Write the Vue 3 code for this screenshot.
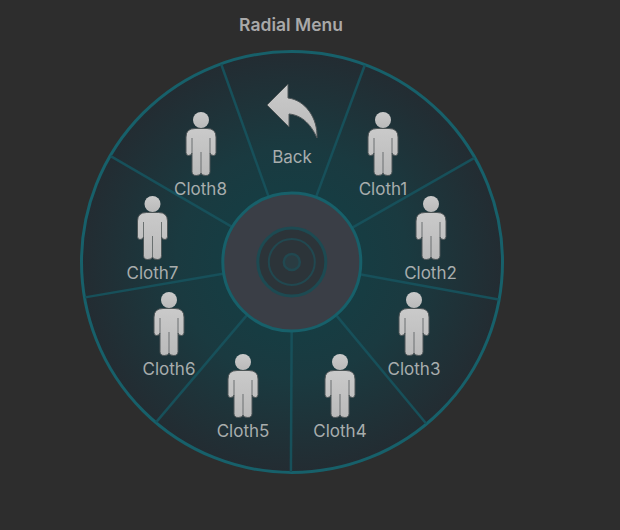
<script setup>
const cx = 292
const cy = 262
const spokeAngles = [20, 60, 100, 140, 180, 220, 260, 300, 340]
const spokes = spokeAngles.map((deg) => {
  const a = ((deg + 0.3) * Math.PI) / 180
  return {
    x1: cx + Math.sin(a) * 70,
    y1: cy - Math.cos(a) * 70,
    x2: cx + Math.sin(a) * 210,
    y2: cy - Math.cos(a) * 210
  }
})
const items = [
  { label: 'Cloth1', x: 383, y: 112, lx: 383, ly: 195 },
  { label: 'Cloth2', x: 431, y: 196, lx: 430.5, ly: 279 },
  { label: 'Cloth3', x: 414, y: 292, lx: 414, ly: 375 },
  { label: 'Cloth4', x: 340, y: 354, lx: 340, ly: 437 },
  { label: 'Cloth5', x: 243, y: 354, lx: 243, ly: 437 },
  { label: 'Cloth6', x: 169, y: 292, lx: 169, ly: 375 },
  { label: 'Cloth7', x: 152.5, y: 196, lx: 152.5, ly: 279 },
  { label: 'Cloth8', x: 201, y: 112, lx: 200.5, ly: 195 }
]
</script>

<template>
  <main class="page">
    <h1 class="title">Radial Menu</h1>
    <div class="canvas">
      <svg class="wheel" width="620" height="530" viewBox="0 0 620 530">
        <defs>
          <radialGradient id="wheelFill" cx="292" cy="262" r="210" gradientUnits="userSpaceOnUse">
            <stop offset="0" stop-color="#114046" />
            <stop offset="0.55" stop-color="#1a3a40" />
            <stop offset="1" stop-color="#232c32" />
          </radialGradient>
          <linearGradient id="iconFill" x1="0" y1="0" x2="0" y2="1">
            <stop offset="0" stop-color="#cacaca" />
            <stop offset="1" stop-color="#bababa" />
          </linearGradient>
          <filter id="soft" x="-10%" y="-10%" width="120%" height="120%">
            <feGaussianBlur stdDeviation="0.35" />
          </filter>
        </defs>
        <circle :cx="cx" :cy="cy" r="210.500" fill="url(#wheelFill)" stroke="#17606a" stroke-width="3" />
        <line
          v-for="(s, i) in spokes"
          :key="i"
          :x1="s.x1"
          :y1="s.y1"
          :x2="s.x2"
          :y2="s.y2"
          stroke="#17505a"
          stroke-width="2.500"
        />
        <circle cx="291.800" :cy="cy" r="69" fill="#3a3e46" stroke="#17606a" stroke-width="3" />
        <circle cx="291.800" :cy="cy" r="34" fill="#2c3439" stroke="#1d4a52" stroke-width="3" />
        <circle cx="291.800" :cy="cy" r="23" fill="none" stroke="#214850" stroke-width="2" />
        <circle cx="291.800" :cy="cy" r="8" fill="#2a3c42" stroke="#214850" stroke-width="2.500" />

        <path
          d="M267 105 L288 84 V98 C305 100 318 118 317 138 C310 122 300 115 289 114 V127 Z"
          fill="url(#iconFill)"
          stroke="#4d5456"
          stroke-width="1"
          stroke-linejoin="round"
          filter="url(#soft)"
        />

        <g v-for="item in items" :key="item.label" :transform="`translate(${item.x - 15} ${item.y})`" filter="url(#soft)">
          <circle cx="15" cy="8" r="8" fill="url(#iconFill)" />
          <path
            d="M9 16.500H21Q30 16.500 30 25V40.500Q30 43.500 27.500 43.500Q24.500 43.500 24 41V59.500Q24 63.500 19.800 63.500Q15.500 63.500 15 61Q14.500 63.500 10.200 63.500Q6 63.500 6 59.500V41Q5.500 43.500 2.500 43.500Q0 43.500 0 40.500V25Q0 16.500 9 16.500Z"
            fill="url(#iconFill)"
            stroke="#4d5456"
            stroke-width="1"
            stroke-linejoin="round"
          />
          <path d="M6 26V41M24 26V41M15 40V61" fill="none" stroke="#6a6f70" stroke-width="1" />
        </g>

        <text class="label" x="292" y="163" text-anchor="middle">Back</text>
        <text
          v-for="item in items"
          :key="item.label + '-label'"
          class="label"
          :x="item.lx"
          :y="item.ly"
          text-anchor="middle"
        >{{ item.label }}</text>
      </svg>
    </div>
  </main>
</template>

<style scoped>
.page {
  width: 620px;
  height: 530px;
  box-sizing: border-box;
  padding-right: 38px;
  display: flex;
  flex-direction: column;
  align-items: center;
  position: relative;
  overflow: hidden;
  background: #2d2d2d;
}
.title {
  margin: 14px 0 0;
  font-family: Inter, "Liberation Sans", sans-serif;
  font-size: 17.5px;
  line-height: 21px;
  font-weight: 600;
  color: #a9a9a9;
}
.canvas {
  position: absolute;
  inset: 0;
}
.wheel {
  display: block;
}
.label {
  font-family: Inter, "Liberation Sans", sans-serif;
  font-size: 17px;
  fill: #a8adad;
}
</style>

<style>
body {
  background: #2d2d2d;
}
</style>
